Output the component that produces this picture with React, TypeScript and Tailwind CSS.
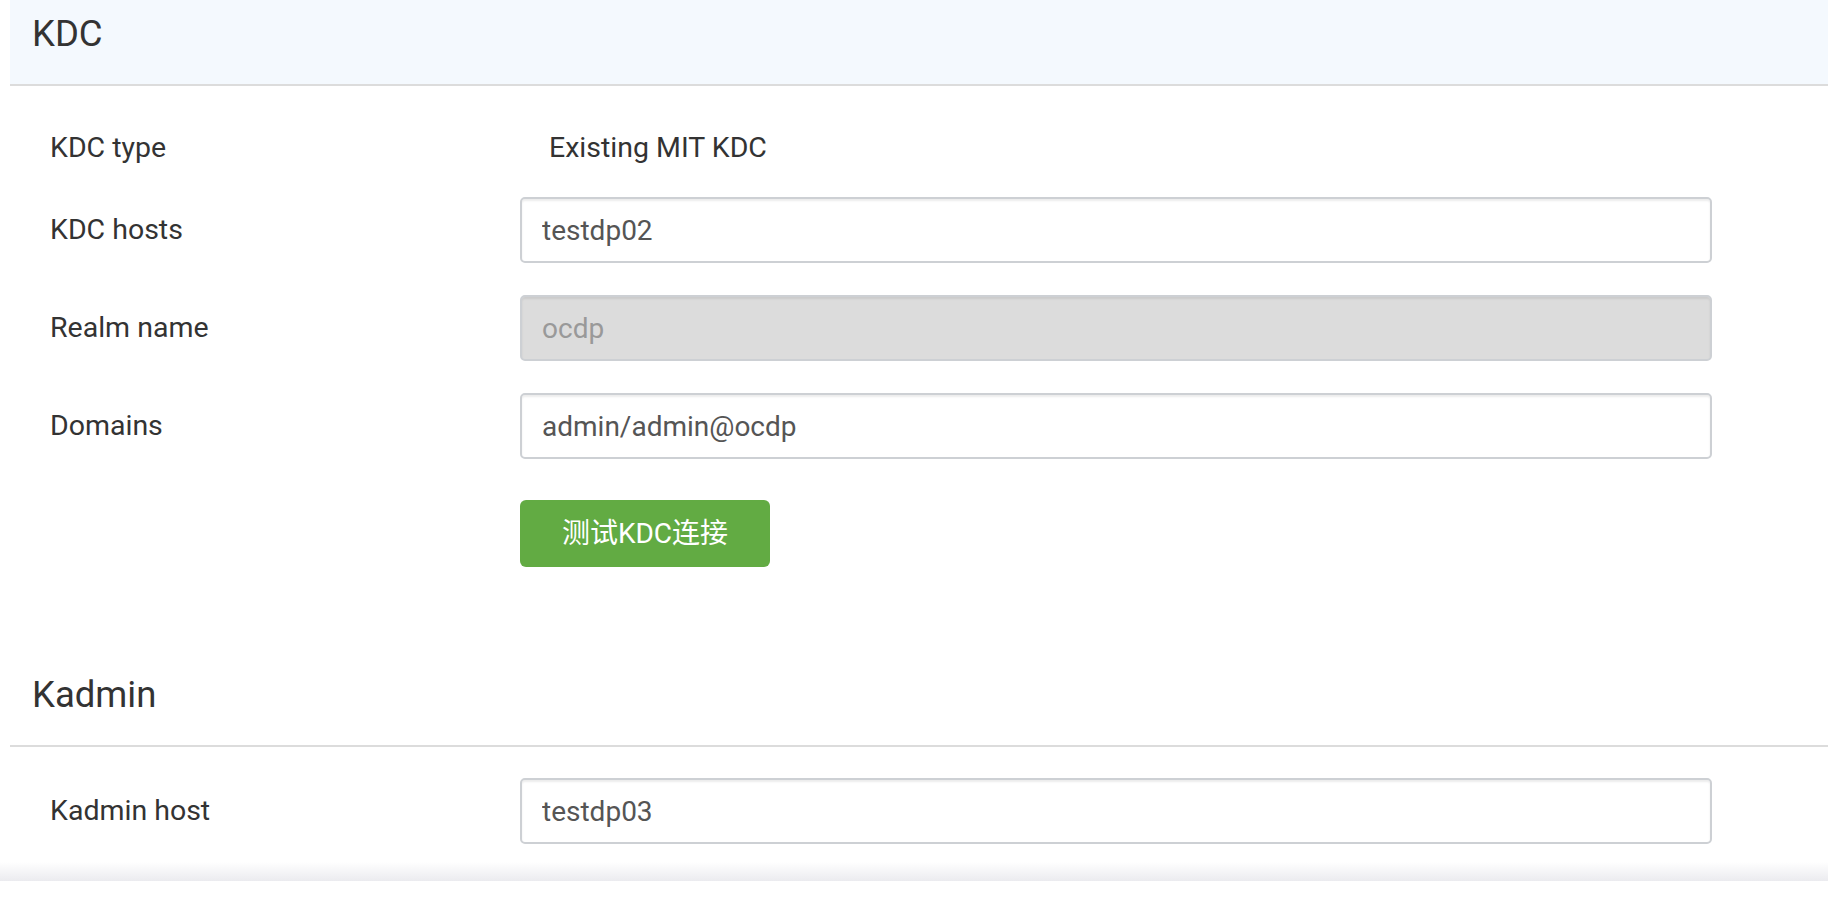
import React from "react";

const font = { fontFamily: "Roboto, 'Noto Sans CJK SC', sans-serif" };

function SectionTitle({ title, tinted }: { title: string; tinted?: boolean }) {
  return (
    <div
      className={`ml-[10px] h-[86px] border-b-2 border-[#dcdcdc] pl-[22px] pt-[14px] text-[36.5px] leading-[40px] text-[#333] ${
        tinted ? "bg-[#f4f9fe]" : "bg-white"
      }`}
    >
      {title}
    </div>
  );
}

function Field({ label, value, disabled, className = "" }: { label: string; value: string; disabled?: boolean; className?: string }) {
  return (
    <div className={`flex items-center ${className}`}>
      <div className="w-[470px] shrink-0 text-[28.5px] leading-[40px] text-[#333]">{label}</div>
      <input
        readOnly
        disabled={disabled}
        value={value}
        className={`h-[66px] flex-1 rounded-[5px] border-2 border-[#cdd0d4] px-[20px] text-[28px] leading-[40px] shadow-[inset_0_2px_2px_rgba(0,0,0,0.075)] outline-none ${
          disabled ? "bg-[#dcdcdc] text-[#999]" : "bg-white text-[#555]"
        }`}
        style={font}
      />
    </div>
  );
}

export default function App() {
  return (
    <div className="min-h-[900px] w-full bg-white" style={font}>
      <SectionTitle title="KDC" tinted />

      <div className="pl-[50px] pr-[116px]">
        <div className="mt-[29px] mb-[16px] flex h-[66px] items-center">
          <div className="w-[470px] shrink-0 text-[28.5px] leading-[40px] text-[#333]">KDC type</div>
          <div className="pl-[29px] text-[28.5px] leading-[40px] text-[#333]">Existing MIT KDC</div>
        </div>
        <Field label="KDC hosts" value="testdp02" className="mb-[32px]" />
        <Field label="Realm name" value="ocdp" disabled className="mb-[32px]" />
        <Field label="Domains" value="admin/admin@ocdp" className="mb-[41px]" />
        <div className="flex">
          <div className="w-[470px] shrink-0" />
          <button className="h-[67px] w-[250px] rounded-[6px] bg-[#62ab43] text-[28px] leading-[40px] text-white" style={font}>
            测试KDC连接
          </button>
        </div>
      </div>

      <div className="mt-[94px]">
        <SectionTitle title="Kadmin" />
      </div>

      <div className="pl-[50px] pr-[116px] pt-[31px]">
        <Field label="Kadmin host" value="testdp03" />
      </div>

      <div className="mt-[18px] h-[19px] w-full bg-linear-to-b from-white to-[#ebebef]" />
    </div>
  );
}
